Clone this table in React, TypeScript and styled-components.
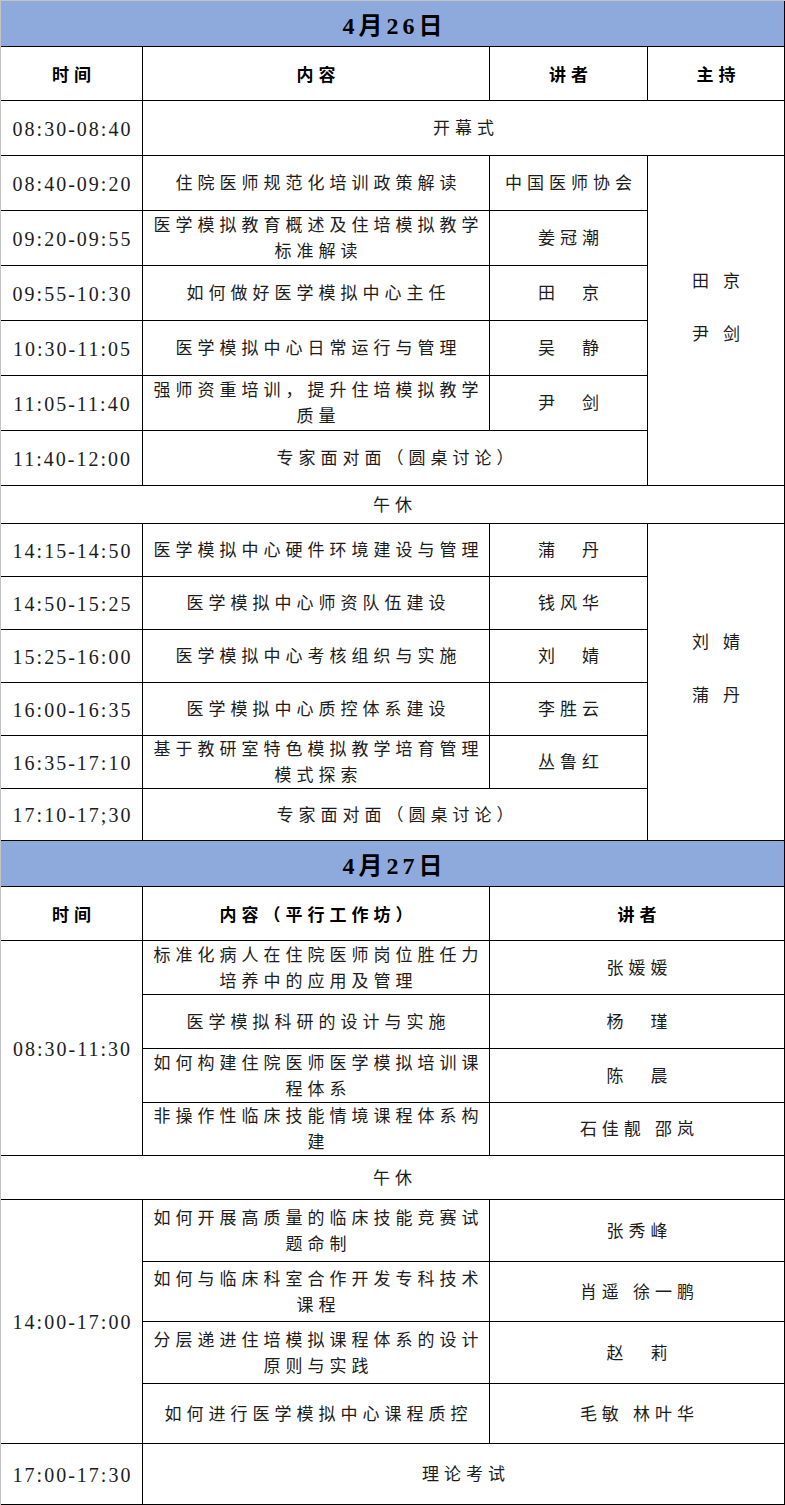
import { Fragment } from 'react';
import styled, { createGlobalStyle, css } from 'styled-components';

const GlobalStyle = createGlobalStyle`
  html, body {
    margin: 0;
    padding: 0;
    background: #ffffff;
  }
`;

const FONT = `"Liberation Serif", "Noto Sans CJK SC", serif`;

const Page = styled.div`
  width: 785px;
  box-sizing: border-box;
  border-top: 1px solid #c3c3c3;
  border-left: 1px solid #c3c3c3;
  font-family: ${FONT};
  color: #1c1c1c;
`;

const Sheet = styled.div<{ $cols: string; $rows: string }>`
  display: grid;
  grid-template-columns: ${(p) => p.$cols};
  grid-template-rows: ${(p) => p.$rows};
`;

type Kind = 'title' | 'head' | 'time' | 'text' | 'host';

const kinds = {
  title: css`
    background: #8ea9db;
    font-size: 24px;
    font-weight: 700;
    letter-spacing: 4px;
    padding-left: 4px;
    color: #000;
  `,
  head: css`
    font-size: 17px;
    font-weight: 700;
    letter-spacing: 5px;
    padding-left: 5px;
    color: #000;
  `,
  time: css`
    font-size: 20px;
    letter-spacing: 2px;
    padding-left: 2px;
    padding-top: 2px;
  `,
  text: css`
    font-size: 17px;
    letter-spacing: 5px;
    padding-left: 5px;
    padding-top: 2px;
    line-height: 26px;
  `,
  host: css`
    font-size: 17px;
    letter-spacing: 5px;
    padding-left: 5px;
    padding-bottom: 26px;
    line-height: 53px;
  `,
};

const Cell = styled.div<{ $c: number; $r: number; $cs?: number; $rs?: number; $kind: Kind }>`
  grid-column: ${(p) => p.$c} / span ${(p) => p.$cs ?? 1};
  grid-row: ${(p) => p.$r} / span ${(p) => p.$rs ?? 1};
  box-sizing: border-box;
  border-right: 1px solid #000;
  border-bottom: 1px solid #000;
  display: flex;
  flex-direction: column;
  align-items: center;
  justify-content: center;
  text-align: center;
  white-space: nowrap;
  overflow: hidden;
  ${(p) => kinds[p.$kind]}
`;

type Session = { time: string; topic: string[]; speaker?: string };

const morning1: Session[] = [
  { time: '08:40-09:20', topic: ['住院医师规范化培训政策解读'], speaker: '中国医师协会' },
  { time: '09:20-09:55', topic: ['医学模拟教育概述及住培模拟教学', '标准解读'], speaker: '姜冠潮' },
  { time: '09:55-10:30', topic: ['如何做好医学模拟中心主任'], speaker: '田　京' },
  { time: '10:30-11:05', topic: ['医学模拟中心日常运行与管理'], speaker: '吴　静' },
  { time: '11:05-11:40', topic: ['强师资重培训，提升住培模拟教学', '质量'], speaker: '尹　剑' },
  { time: '11:40-12:00', topic: ['专家面对面（圆桌讨论）'] },
];

const afternoon1: Session[] = [
  { time: '14:15-14:50', topic: ['医学模拟中心硬件环境建设与管理'], speaker: '蒲　丹' },
  { time: '14:50-15:25', topic: ['医学模拟中心师资队伍建设'], speaker: '钱风华' },
  { time: '15:25-16:00', topic: ['医学模拟中心考核组织与实施'], speaker: '刘　婧' },
  { time: '16:00-16:35', topic: ['医学模拟中心质控体系建设'], speaker: '李胜云' },
  { time: '16:35-17:10', topic: ['基于教研室特色模拟教学培育管理', '模式探索'], speaker: '丛鲁红' },
  { time: '17:10-17;30', topic: ['专家面对面（圆桌讨论）'] },
];

const morning2: Session[] = [
  { time: '', topic: ['标准化病人在住院医师岗位胜任力', '培养中的应用及管理'], speaker: '张媛媛' },
  { time: '', topic: ['医学模拟科研的设计与实施'], speaker: '杨　瑾' },
  { time: '', topic: ['如何构建住院医师医学模拟培训课', '程体系'], speaker: '陈　晨' },
  { time: '', topic: ['非操作性临床技能情境课程体系构', '建'], speaker: '石佳靓 邵岚' },
];

const afternoon2: Session[] = [
  { time: '', topic: ['如何开展高质量的临床技能竞赛试', '题命制'], speaker: '张秀峰' },
  { time: '', topic: ['如何与临床科室合作开发专科技术', '课程'], speaker: '肖遥 徐一鹏' },
  { time: '', topic: ['分层递进住培模拟课程体系的设计', '原则与实践'], speaker: '赵　莉' },
  { time: '', topic: ['如何进行医学模拟中心课程质控'], speaker: '毛敏 林叶华' },
];

const Lines = ({ lines }: { lines: string[] }) => (
  <>
    {lines.map((l, i) => (
      <span key={i}>{l}</span>
    ))}
  </>
);

const Day1Block = ({ sessions, start }: { sessions: Session[]; start: number }) => (
  <>
    {sessions.map((s, i) => (
      <Fragment key={s.time}>
        <Cell $kind="time" $c={1} $r={start + i}>
          {s.time}
        </Cell>
        {s.speaker ? (
          <>
            <Cell $kind="text" $c={2} $r={start + i}>
              <Lines lines={s.topic} />
            </Cell>
            <Cell $kind="text" $c={3} $r={start + i}>
              {s.speaker}
            </Cell>
          </>
        ) : (
          <Cell $kind="text" $c={2} $cs={2} $r={start + i}>
            <Lines lines={s.topic} />
          </Cell>
        )}
      </Fragment>
    ))}
  </>
);

const Day2Block = ({ sessions, start }: { sessions: Session[]; start: number }) => (
  <>
    {sessions.map((s, i) => (
      <Fragment key={i}>
        <Cell $kind="text" $c={2} $r={start + i}>
          <Lines lines={s.topic} />
        </Cell>
        <Cell $kind="text" $c={3} $r={start + i}>
          {s.speaker}
        </Cell>
      </Fragment>
    ))}
  </>
);

export default function App() {
  return (
    <Page>
      <GlobalStyle />
      <Sheet
        $cols="142px 347px 158px 137px"
        $rows="46px 54px repeat(7, 55px) 38px repeat(5, 53px) 52px"
      >
        <Cell $kind="title" $c={1} $cs={4} $r={1}>
          4月26日
        </Cell>
        <Cell $kind="head" $c={1} $r={2}>时间</Cell>
        <Cell $kind="head" $c={2} $r={2}>内容</Cell>
        <Cell $kind="head" $c={3} $r={2}>讲者</Cell>
        <Cell $kind="head" $c={4} $r={2}>主持</Cell>

        <Cell $kind="time" $c={1} $r={3}>08:30-08:40</Cell>
        <Cell $kind="text" $c={2} $cs={3} $r={3}>开幕式</Cell>

        <Day1Block sessions={morning1} start={4} />
        <Cell $kind="host" $c={4} $r={4} $rs={6}>
          <span>田 京</span>
          <span>尹 剑</span>
        </Cell>

        <Cell $kind="text" $c={1} $cs={4} $r={10}>午休</Cell>

        <Day1Block sessions={afternoon1} start={11} />
        <Cell $kind="host" $c={4} $r={11} $rs={6}>
          <span>刘 婧</span>
          <span>蒲 丹</span>
        </Cell>
      </Sheet>

      <Sheet
        $cols="142px 347px 295px"
        $rows="46px 54px 54px 54px 54px 53px 44px 62px 60px 62px 60px 61px"
      >
        <Cell $kind="title" $c={1} $cs={3} $r={1}>
          4月27日
        </Cell>
        <Cell $kind="head" $c={1} $r={2}>时间</Cell>
        <Cell $kind="head" $c={2} $r={2}>内容（平行工作坊）</Cell>
        <Cell $kind="head" $c={3} $r={2}>讲者</Cell>

        <Cell $kind="time" $c={1} $r={3} $rs={4}>08:30-11:30</Cell>
        <Day2Block sessions={morning2} start={3} />

        <Cell $kind="text" $c={1} $cs={3} $r={7}>午休</Cell>

        <Cell $kind="time" $c={1} $r={8} $rs={4}>14:00-17:00</Cell>
        <Day2Block sessions={afternoon2} start={8} />

        <Cell $kind="time" $c={1} $r={12}>17:00-17:30</Cell>
        <Cell $kind="text" $c={2} $cs={2} $r={12}>理论考试</Cell>
      </Sheet>
    </Page>
  );
}
